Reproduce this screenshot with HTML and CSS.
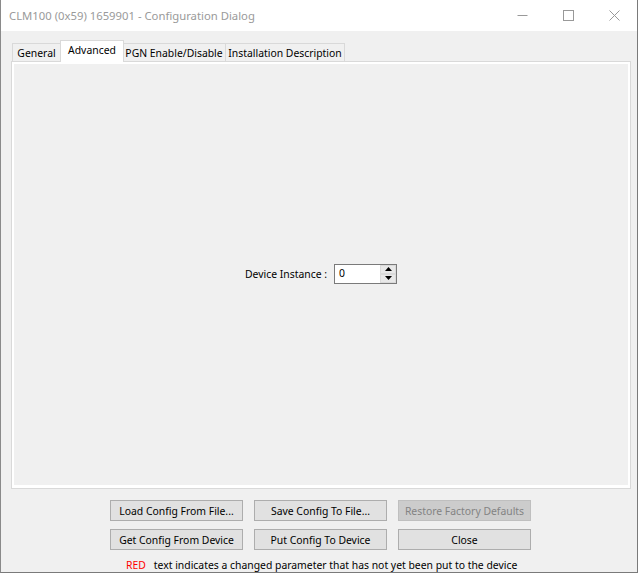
FILE: index.html
```html
<!DOCTYPE html>
<html>
<head>
<meta charset="utf-8">
<link rel="stylesheet" href="styles.css">
</head>
<body>
<div class="window">
  <div class="titlebar">
    <div class="title">CLM100 (0x59) 1659901 - Configuration Dialog</div>
    <div class="controls">
      <div class="ctrl"><svg width="11" height="11" viewBox="0 0 11 11"><path d="M0.5 5.5H10.5" stroke="#999" stroke-width="1"/></svg></div>
      <div class="ctrl"><svg width="11" height="11" viewBox="0 0 11 11"><rect x="0.5" y="0.5" width="10" height="10" fill="none" stroke="#999" stroke-width="1"/></svg></div>
      <div class="ctrl"><svg width="11" height="11" viewBox="0 0 11 11"><path d="M0.5 0.5L10.5 10.5M10.5 0.5L0.5 10.5" stroke="#999" stroke-width="1"/></svg></div>
    </div>
  </div>
  <div class="client">
    <div class="tabs">
      <div class="tab t-general">General</div>
      <div class="tab active t-adv">Advanced</div>
      <div class="tab t-pgn">PGN Enable/Disable</div>
      <div class="tab t-inst">Installation Description</div>
    </div>
    <div class="panel">
      <div class="page">
        <div class="field">
          <span class="label">Device Instance :</span>
          <div class="spin">
            <div class="spin-value">0</div>
            <div class="spin-btns">
              <div class="sbtn"><svg width="7" height="4" viewBox="0 0 7 4"><path d="M3.5 0L7 4H0Z" fill="#000"/></svg></div>
              <div class="sbtn"><svg width="7" height="4" viewBox="0 0 7 4"><path d="M0 0H7L3.5 4Z" fill="#000"/></svg></div>
            </div>
          </div>
        </div>
      </div>
    </div>
    <div class="buttons">
      <div class="btn">Load Config From File...</div>
      <div class="btn">Save Config To File...</div>
      <div class="btn disabled">Restore Factory Defaults</div>
      <div class="btn">Get Config From Device</div>
      <div class="btn">Put Config To Device</div>
      <div class="btn">Close</div>
    </div>
    <div class="note"><span class="red">RED</span>text indicates a changed parameter that has not yet been put to the device</div>
  </div>
</div>
</body>
</html>
```

FILE: styles.css
```css
html, body {
  margin: 0;
  padding: 0;
}
body {
  width: 638px;
  height: 573px;
  overflow: hidden;
  background: #f0f0f0;
  font-family: "Noto Sans", "Open Sans", sans-serif;
  font-size: 10.4px;
  color: #000;
}
.window {
  box-sizing: border-box;
  width: 638px;
  height: 573px;
  border-left: 1px solid #8a8a8a;
  border-right: 1px solid #7a7a7a;
  border-bottom: 1px solid #7a7a7a;
  background: #f0f0f0;
}
.titlebar {
  height: 31px;
  background: #fff;
  display: flex;
  align-items: center;
  justify-content: space-between;
}
.title {
  padding-left: 8px;
  font-size: 11.3px;
  color: #9a9a9a;
  padding-top: 0;
}
.controls {
  display: flex;
  height: 31px;
}
.ctrl {
  width: 46px;
  height: 31px;
  display: flex;
  align-items: center;
  justify-content: center;
}
.client {
  padding-top: 10px;
}
.tabs {
  display: flex;
  align-items: flex-end;
  height: 20px;
  padding-left: 11px;
  position: relative;
  z-index: 2;
}
.tab {
  box-sizing: border-box;
  height: 18px;
  border: 1px solid #d9d9d9;
  border-bottom: none;
  background: #f0f0f0;
  display: flex;
  align-items: center;
  justify-content: center;
  padding-top: 1px;
  white-space: nowrap;
}
.t-general { width: 49px; }
.t-adv { width: 64px; margin-left: -1px; }
.t-pgn { width: 104px; margin-left: -2px; }
.t-inst { width: 120px; margin-left: -1px; }
.tab.active {
  height: 22px;
  margin-bottom: -1px;
  background: #fff;
  position: relative;
  z-index: 3;
  padding-top: 0;
  padding-bottom: 3px;
}
.panel {
  box-sizing: border-box;
  margin-left: 10px;
  width: 620px;
  height: 428px;
  border: 1px solid #d9d9d9;
  background: #fff;
  padding: 2px 2px 3px 2px;
  position: relative;
  z-index: 1;
}
.page {
  width: 100%;
  height: 100%;
  background: #f0f0f0;
  display: flex;
  align-items: center;
  justify-content: center;
}
.field {
  display: flex;
  align-items: center;
  gap: 7px;
  margin-top: -2px;
}
.spin {
  box-sizing: border-box;
  width: 63px;
  height: 20px;
  border: 1px solid #7a7a7a;
  background: #fff;
  display: flex;
}
.spin-value {
  flex: 1;
  padding-left: 4px;
  line-height: 17px;
}
.spin-btns {
  width: 16px;
  display: flex;
  flex-direction: column;
}
.sbtn {
  flex: 1;
  box-sizing: border-box;
  border: 1px solid #dadada;
  background: #e8e8e8;
  display: flex;
  align-items: center;
  justify-content: center;
}
.buttons {
  margin-top: 11px;
  margin-left: 109px;
  display: grid;
  grid-template-columns: 133px 133px 133px;
  grid-auto-rows: 21px;
  column-gap: 11px;
  row-gap: 8px;
}
.btn {
  box-sizing: border-box;
  border: 1px solid #adadad;
  background: #e1e1e1;
  display: flex;
  align-items: center;
  justify-content: center;
  white-space: nowrap;
}
.btn.disabled {
  background: #cccccc;
  border-color: #bfbfbf;
  color: #838383;
}
.note {
  margin-top: 8px;
  margin-left: 125px;
  white-space: nowrap;
  line-height: 15px;
}
.red {
  color: #ff0000;
  margin-right: 8px;
}
```
